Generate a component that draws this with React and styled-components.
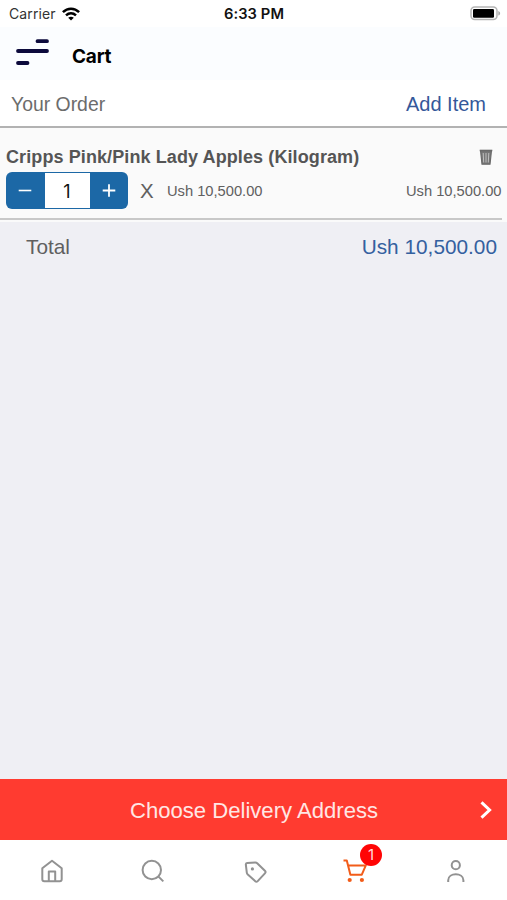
import React from 'react';
import styled, { createGlobalStyle } from 'styled-components';

const item = {
  name: 'Cripps Pink/Pink Lady Apples (Kilogram)',
  quantity: 1,
  price: 'Ush 10,500.00',
  total: 'Ush 10,500.00',
};

const GlobalStyle = createGlobalStyle`
  * { box-sizing: border-box; }
  body {
    margin: 0;
    font-family: 'Liberation Sans', Arial, sans-serif;
    background: #efeff4;
  }
  button { font: inherit; border: 0; padding: 0; cursor: pointer; }
  svg { display: block; }
`;

const MenuIcon = () => (
  <svg width="34" height="28" viewBox="0 0 34 28" stroke="#0c0a3c" strokeWidth="3.8" strokeLinecap="round">
    <path d="M21.5 3.2h9.5M2 13h29M2 25h9.5" />
  </svg>
);

const WifiIcon = () => (
  <svg width="18" height="14" viewBox="0 0 18 14" fill="none" stroke="#000" strokeWidth="2.5">
    <path d="M.9 5.1c4.7-4.6 11.5-4.6 16.2 0" />
    <path d="M4 8.4c3-2.8 7-2.8 10 0" />
    <path d="M9 13.6l-2.8-2.9c1.7-1.4 3.9-1.4 5.6 0z" fill="#000" stroke="none" />
  </svg>
);

const BatteryIcon = () => (
  <svg width="31" height="15" viewBox="0 0 31 15">
    <rect x="1" y="1" width="26" height="12.5" rx="3.7" fill="#fff" stroke="#b5b5b5" strokeWidth="1.5" />
    <rect x="3" y="3" width="21" height="8.8" rx="1.2" fill="#000" />
    <path d="M28.3 5c2.4.8 2.4 3.8 0 4.6z" fill="#aaa" />
  </svg>
);

const TrashIcon = () => (
  <svg width="14" height="17" viewBox="0 0 14 17" fill="none">
    <path d="M1.6 2.2h10.8L11 15.2H3z" fill="#777" stroke="#6a6a6a" strokeWidth="1.2" />
    <path d="M.7 1.5h12.6" stroke="#6a6a6a" strokeWidth="1.6" />
    <path d="M4.2 4l.5 9.5M7 4v9.5M9.8 4l-.5 9.5" stroke="#c0c0c0" strokeWidth="1" />
  </svg>
);

const ChevronIcon = () => (
  <svg width="12" height="18" viewBox="0 0 12 18" fill="none" stroke="#fff" strokeWidth="3">
    <path d="M1.5 1.3L9.6 9l-8.1 7.7" />
  </svg>
);

const TabIcon = ({ children, color = '#929292' }) => (
  <svg width="26" height="26" viewBox="0 0 26 26" fill="none" stroke={color} strokeWidth="2" strokeLinejoin="round">
    {children}
  </svg>
);

const App = () => (
  <Screen>
    <GlobalStyle />
    <StatusBar>
      <Carrier>
        Carrier
        <WifiIcon />
      </Carrier>
      <Time>6:33 PM</Time>
      <Battery>
        <BatteryIcon />
      </Battery>
    </StatusBar>
    <Header>
      <MenuIcon />
      <Title>Cart</Title>
    </Header>
    <OrderBar>
      <span>Your Order</span>
      <AddItem>Add Item</AddItem>
    </OrderBar>
    <CartItem>
      <ItemTop>
        <ItemName>{item.name}</ItemName>
        <TrashIcon />
      </ItemTop>
      <ItemBottom>
        <Stepper>
          <StepButton aria-label="Less">
            <svg width="14" height="14" viewBox="0 0 14 14" stroke="#fff" strokeWidth="1.6"><path d="M.7 6.5h12.6" /></svg>
          </StepButton>
          <Quantity>{item.quantity}</Quantity>
          <StepButton aria-label="More">
            <svg width="14" height="14" viewBox="0 0 14 14" stroke="#fff" strokeWidth="1.8"><path d="M.7 6.5h12.6M7 .2v12.6" /></svg>
          </StepButton>
        </Stepper>
        <Times>X</Times>
        <Price>{item.price}</Price>
        <LineTotal>{item.total}</LineTotal>
      </ItemBottom>
    </CartItem>
    <TotalRow>
      <span>Total</span>
      <TotalPrice>{item.total}</TotalPrice>
    </TotalRow>
    <Checkout>
      <span />
      <span>Choose Delivery Address</span>
      <ChevronIcon />
    </Checkout>
    <TabBar>
      <Tab $shift={2}>
        <TabIcon>
          <path d="M3.3 10.3L13 2.8l9.7 7.5v11a2 2 0 0 1-2 2H5.3a2 2 0 0 1-2-2z" />
          <path d="M9.8 23v-9.4h6.4V23" />
        </TabIcon>
      </Tab>
      <Tab $shift={2}>
        <TabIcon>
          <circle cx="11.8" cy="12" r="9.2" />
          <path d="M18.5 18.6l4.8 4.8" />
        </TabIcon>
      </Tab>
      <Tab $shift={2}>
        <TabIcon>
          <path d="M4.8 6.4q0-1.2 1.3-1.3l8.3-.6q1 0 1.8.7l7.7 7.6q1.3 1.3 0 2.6l-7.2 7.7q-1.3 1.3-2.6 0l-7.3-6.5q-.9-.9-1-1.9z" />
          <circle cx="11.4" cy="10.9" r=".9" fill="#929292" strokeWidth="1.4" />
        </TabIcon>
      </Tab>
      <Tab $shift={2}>
        <TabIcon color="#f25c19">
          <path d="M.5 2.6h3.3l3.6 14.1h11.4l4-9.3H5" />
          <circle cx="6.7" cy="22" r="1.1" fill="#f25c19" />
          <circle cx="18.9" cy="22" r="1.1" fill="#f25c19" />
        </TabIcon>
        <Badge>1</Badge>
      </Tab>
      <Tab>
        <TabIcon>
          <circle cx="12.8" cy="7.2" r="4.1" />
          <path d="M5.2 23.9v-1.7c0-8 15.2-8 15.2 0v1.7" />
        </TabIcon>
      </Tab>
    </TabBar>
  </Screen>
);

export default App;

const Screen = styled.div`
  display: flex;
  flex-direction: column;
  height: 900px;
  overflow: hidden;
  color: #606060;
`;

const StatusBar = styled.div`
  display: grid;
  grid-template-columns: 1fr auto 1fr;
  align-items: center;
  height: 27px;
  padding: 0 6px 0 9px;
  background: #fff;
  color: #111;
  font-family: Inter, sans-serif;
`;

const Carrier = styled.div`
  display: flex;
  align-items: center;
  gap: 6px;
  font-size: 14px;
  letter-spacing: 0.1px;
  color: #333;
`;

const Time = styled.div`
  margin-right: 2px;
  font-size: 14.7px;
  font-weight: 600;
  letter-spacing: 0.1px;
`;

const Battery = styled.div`
  justify-self: end;
`;

const Header = styled.header`
  display: flex;
  align-items: center;
  height: 53px;
  padding: 0 0 3px 16px;
  background: #fbfdff;
`;

const Title = styled.h1`
  margin: 8px 0 0 22px;
  font-family: Inter, sans-serif;
  font-size: 19px;
  font-weight: 700;
  letter-spacing: -0.2px;
  color: #000;
`;

const OrderBar = styled.div`
  display: flex;
  align-items: center;
  justify-content: space-between;
  height: 48px;
  padding: 3px 21px 0 11px;
  border-bottom: 2px solid #b2b2b2;
  background: #fff;
  font-size: 19.4px;
  color: #6c6c6c;
`;

const AddItem = styled.button`
  background: none;
  font-size: 20px;
  color: #34589a;
`;

const CartItem = styled.section`
  height: 94px;
  padding: 18px 0 0 6px;
  background: linear-gradient(#c8c8c8, #c8c8c8) 0 90px / 502px 2px no-repeat #fafafa;
`;

const ItemTop = styled.div`
  display: flex;
  align-items: center;
  justify-content: space-between;
  height: 22px;
  padding-right: 14px;
`;

const ItemName = styled.div`
  font-size: 18px;
  font-weight: bold;
  letter-spacing: 0.1px;
  color: #555;
`;

const ItemBottom = styled.div`
  display: flex;
  align-items: center;
  height: 37px;
  margin-top: 4px;
  padding-right: 5.5px;
`;

const Stepper = styled.div`
  display: flex;
  width: 122px;
  height: 37px;
  padding: 1px 0;
  border-radius: 6px;
  background: #1c68a6;
`;

const StepButton = styled.button`
  display: flex;
  flex: 1;
  align-items: center;
  justify-content: center;
  background: none;
`;

const Quantity = styled.div`
  width: 45px;
  background: #fff;
  color: #111;
  font-family: Inter, sans-serif;
  font-size: 18px;
  line-height: 37px;
  text-align: center;
`;

const Times = styled.span`
  width: 39px;
  padding-left: 12px;
  font-size: 20.5px;
`;

const Price = styled.span`
  font-size: 14.7px;
`;

const LineTotal = styled(Price)`
  margin-left: auto;
`;

const TotalRow = styled.div`
  display: flex;
  flex: 1;
  justify-content: space-between;
  padding: 13px 10px 0 26px;
  background: #efeff4;
  font-size: 20.8px;
  line-height: 24px;
`;

const TotalPrice = styled.span`
  color: #34609f;
`;

const Checkout = styled.button`
  display: grid;
  grid-template-columns: 1fr auto 1fr;
  align-items: center;
  height: 61px;
  padding: 2px 15px 0 16px;
  background: #ff3b30;
  color: #ffe6e4;
  font-size: 22.1px;

  svg {
    justify-self: end;
    margin-bottom: 2px;
  }
`;

const TabBar = styled.nav`
  display: flex;
  height: 60px;
  padding-top: 1px;
  background: #fff;
`;

const Tab = styled.div`
  position: relative;
  display: flex;
  width: 20%;
  align-items: center;
  justify-content: center;
  padding-left: ${({ $shift = 0 }) => $shift}px;
`;

const Badge = styled.span`
  position: absolute;
  top: 3px;
  left: 56px;
  width: 22px;
  height: 22px;
  border-radius: 50%;
  background: #ff0505;
  color: #ffdede;
  font-family: Inter, sans-serif;
  font-size: 15px;
  line-height: 22px;
  text-align: center;
`;
